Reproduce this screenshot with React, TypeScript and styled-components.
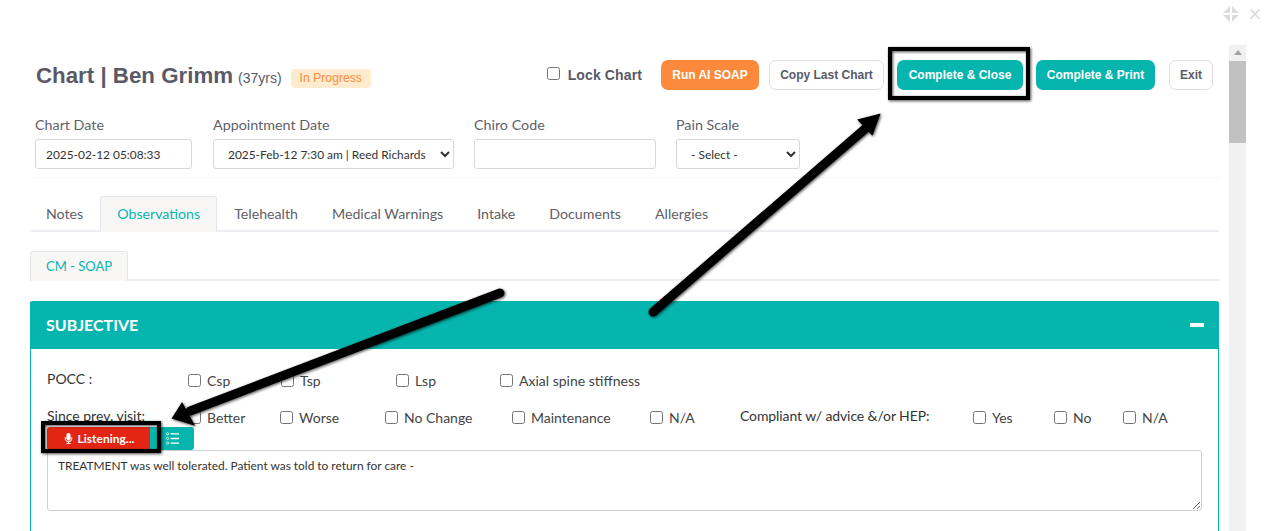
import React from 'react';
import styled, { createGlobalStyle } from 'styled-components';
import { FaMicrophone } from 'react-icons/fa';

const GlobalStyle = createGlobalStyle`
  html, body {
    margin: 0;
    padding: 0;
    background: #fff;
  }
  * {
    box-sizing: border-box;
  }
`;

const Page = styled.div`
  position: relative;
  width: 1270px;
  height: 531px;
  overflow: hidden;
  background: #fff;
  font-family: Lato, 'Noto Sans', sans-serif;
  color: #3a3a3a;
`;

const TopBar = styled.div`
  display: flex;
  justify-content: flex-end;
  align-items: center;
  gap: 11px;
  height: 28px;
  padding-right: 10px;
  margin-bottom: 17px;
`;

const Body = styled.div`
  display: flex;
  align-items: flex-start;
  padding-left: 30px;
`;

const Content = styled.div`
  width: 1189px;
  flex: none;
`;

const Scrollbar = styled.div`
  margin-left: 10px;
  width: 17px;
  height: 486px;
  background: #f1f1f1;
  flex: none;
  padding-top: 5px;
`;

const ScrollArrow = styled.div`
  width: 0;
  height: 0;
  margin: 0 auto 6px;
  border-left: 4px solid transparent;
  border-right: 4px solid transparent;
  border-bottom: 5px solid #a3a3a3;
`;

const ScrollThumb = styled.div`
  height: 82px;
  background: #c1c1c1;
`;

const HeaderRow = styled.div`
  display: flex;
  align-items: center;
  height: 30px;
  margin-top: 15px;
  padding: 0 6px;
`;

const Title = styled.h1`
  margin: 2px 0 0;
  font: 700 22.3px 'Liberation Sans', Arial, sans-serif;
  color: #5a5a66;
`;

const Age = styled.span`
  margin-left: 5px;
  font: 400 14px 'Liberation Sans', Arial, sans-serif;
  color: #5a5a66;
  padding-top: 6px;
`;

const Badge = styled.span`
  margin-left: 9px;
  margin-top: 7px;
  height: 19px;
  padding: 0 9px;
  border-radius: 4px;
  background: #ffeccf;
  color: #fd8a3c;
  font: 400 12.2px/19px 'Liberation Sans', Arial, sans-serif;
`;

const LockLabel = styled.label`
  display: flex;
  align-items: center;
  margin-left: auto;
  font: 700 14px 'Liberation Sans', Arial, sans-serif;
  letter-spacing: 0.12px;
  color: #5a5a66;
  margin-right: 19px;
`;

const NativeCheck = styled.input.attrs({ type: 'checkbox' })`
  width: 13px;
  height: 13px;
  margin: 0;
  flex: none;
`;

const LockCheck = styled(NativeCheck)`
  margin-right: 8px;
  margin-top: -3px;
`;

const ActionButton = styled.button<{ $tone: 'orange' | 'teal' | 'plain'; $width: number; $gap: number }>`
  width: ${(p) => p.$width}px;
  height: 30px;
  margin-left: ${(p) => p.$gap}px;
  padding: 0;
  border-radius: 7px;
  border: 1px solid ${(p) => (p.$tone === 'plain' ? '#dedede' : 'transparent')};
  background: ${(p) => (p.$tone === 'orange' ? '#fd8a3c' : p.$tone === 'teal' ? '#06b5ad' : '#fff')};
  color: ${(p) => (p.$tone === 'plain' ? '#5a5a66' : '#fff')};
  font: 700 12px 'Liberation Sans', Arial, sans-serif;
  flex: none;
`;

const FieldRow = styled.div`
  display: flex;
  margin-top: 26px;
  padding: 0 5px 8px;
  border-bottom: 1px solid #f6f6f6;
`;

const Field = styled.div<{ $width: number; $gap: number }>`
  width: ${(p) => p.$width}px;
  margin-right: ${(p) => p.$gap}px;
  flex: none;
`;

const FieldLabel = styled.div`
  font-size: 14.3px;
  line-height: 18px;
  margin-bottom: 5px;
  color: #5f5f68;
`;

const TextInput = styled.input`
  display: block;
  width: 100%;
  height: 30px;
  padding: 0 10px;
  border: 1px solid #d8d8d8;
  border-radius: 3px;
  background: #fff;
  font: 400 11.9px Lato, sans-serif;
  color: #333;
`;

const Select = styled.select`
  display: block;
  width: 100%;
  height: 30px;
  padding-left: 10px;
  border: 1px solid #d8d8d8;
  border-radius: 3px;
  background: #fff;
  font: 400 11.9px Lato, sans-serif;
  color: #333;
`;

const Tabs = styled.div`
  display: flex;
  margin-top: 18px;
  height: 36px;
  border-bottom: 2px solid #eeeef2;

  & > :first-child {
    margin-left: -1px;
  }
`;

const Tab = styled.div<{ $active?: boolean }>`
  height: 36px;
  padding: 0 16px;
  border: 1px solid ${(p) => (p.$active ? '#e4e6ea' : 'transparent')};
  border-bottom: none;
  border-radius: 3px 3px 0 0;
  background: ${(p) => (p.$active ? '#f8f7f6' : 'transparent')};
  color: ${(p) => (p.$active ? '#06b5ad' : '#606068')};
  font-size: 14.2px;
  line-height: 34px;
  flex: none;
`;

const SubTabs = styled(Tabs)`
  margin-top: 19px;
  height: 30px;

  & > :first-child {
    margin-left: 0;
  }
`;

const SubTab = styled(Tab)`
  height: 30px;
  line-height: 28px;
  width: 98px;
  text-align: center;
  padding: 0;
  font-size: 13px;
`;

const Panel = styled.section`
  margin-top: 20px;
  border: 1px solid #06b5ad;
  border-top: none;
  border-radius: 3px 3px 0 0;
  height: 240px;
`;

const PanelHeader = styled.div`
  display: flex;
  align-items: center;
  justify-content: space-between;
  height: 48px;
  margin: 0 -1px;
  padding: 0 15px 2px 16px;
  background: #06b5ad;
  border-radius: 3px 3px 0 0;
  color: #fff;
  font-size: 16px;
  font-weight: 700;
`;

const Collapse = styled.div`
  width: 14px;
  height: 4px;
  margin-top: 2px;
  background: #fff;
`;

const PanelBody = styled.div`
  padding: 0 16px;
`;

const OptionRow = styled.div<{ $top: number }>`
  display: flex;
  align-items: center;
  height: 22px;
  margin-top: ${(p) => p.$top}px;
  font-size: 14px;
`;

const RowLabel = styled.div<{ $width: number; $lift: number }>`
  width: ${(p) => p.$width}px;
  flex: none;
  margin-top: -${(p) => p.$lift}px;
  color: #333;
`;

const Option = styled.label<{ $width: number }>`
  display: flex;
  align-items: center;
  width: ${(p) => p.$width}px;
  flex: none;
  color: #444;
  gap: 6px;
`;

const ComplianceLabel = styled(RowLabel)`
  letter-spacing: -0.1px;
`;

const Toolbar = styled.div`
  display: flex;
  height: 23px;
  margin-top: -1px;
`;

const MicButton = styled.button`
  display: flex;
  align-items: center;
  justify-content: center;
  gap: 4px;
  width: 103px;
  height: 23px;
  padding: 0;
  border: none;
  border-radius: 3px 0 0 3px;
  background: #e32614;
  color: #fff;
  font: 700 12px Lato, sans-serif;
`;

const ListButton = styled.button`
  display: flex;
  align-items: center;
  justify-content: center;
  width: 44px;
  height: 23px;
  padding: 0;
  border: none;
  border-radius: 0 3px 3px 0;
  background: #06b5ad;
`;

const Notes = styled.textarea`
  display: block;
  width: 1155px;
  height: 61px;
  padding: 7px 10px;
  border: 1px solid #d0d0d0;
  border-radius: 3px;
  font: 400 11.9px Lato, sans-serif;
  color: #333;
`;

const Annotations = styled.svg`
  position: absolute;
  inset: 0;
  pointer-events: none;
`;

const ResizeIcons = () => (
  <svg width="16" height="16" viewBox="0 0 16 16" fill="#dcdcdc">
    <path d="M7 0v7H0zM9 0v7h7zM7 16V9H0zM9 16V9h7z" />
  </svg>
);

const CloseIcon = () => (
  <svg width="10" height="10" viewBox="0 0 10 10" stroke="#d8d8d8" strokeWidth="1.5">
    <path d="M0.5 0.5l9 9M9.5 0.5l-9 9" />
  </svg>
);

const ListIcon = () => (
  <svg width="13" height="13" viewBox="0 0 14 14" fill="none" stroke="#fff">
    <circle cx="1.7" cy="2" r="1.2" strokeWidth="0.8" />
    <circle cx="1.7" cy="7" r="1.2" strokeWidth="0.8" />
    <circle cx="1.7" cy="12" r="1.2" strokeWidth="0.8" />
    <path d="M5 2h9M5 7h9M5 12h9" strokeWidth="1.4" />
  </svg>
);

const pocc = [
  { label: 'Csp', width: 93 },
  { label: 'Tsp', width: 115 },
  { label: 'Lsp', width: 104 },
  { label: 'Axial spine stiffness', width: 200 },
];

const since = [
  { label: 'Better', width: 92 },
  { label: 'Worse', width: 105 },
  { label: 'No Change', width: 127 },
  { label: 'Maintenance', width: 138 },
  { label: 'N/A', width: 90 },
];

const compliance = [
  { label: 'Yes', width: 81 },
  { label: 'No', width: 69 },
  { label: 'N/A', width: 50 },
];

const tabs = ['Notes', 'Observations', 'Telehealth', 'Medical Warnings', 'Intake', 'Documents', 'Allergies'];

const App = () => (
  <Page>
    <GlobalStyle />
    <TopBar>
      <ResizeIcons />
      <CloseIcon />
    </TopBar>
    <Body>
      <Content>
        <HeaderRow>
          <Title>Chart | Ben Grimm</Title>
          <Age>(37yrs)</Age>
          <Badge>In Progress</Badge>
          <LockLabel>
            <LockCheck />
            Lock Chart
          </LockLabel>
          <ActionButton $tone="orange" $width={98} $gap={0}>Run AI SOAP</ActionButton>
          <ActionButton $tone="plain" $width={115} $gap={10}>Copy Last Chart</ActionButton>
          <ActionButton $tone="teal" $width={126} $gap={13}>Complete &amp; Close</ActionButton>
          <ActionButton $tone="teal" $width={119} $gap={13}>Complete &amp; Print</ActionButton>
          <ActionButton $tone="plain" $width={44} $gap={14}>Exit</ActionButton>
        </HeaderRow>
        <FieldRow>
          <Field $width={157} $gap={21}>
            <FieldLabel>Chart Date</FieldLabel>
            <TextInput defaultValue="2025-02-12 05:08:33" />
          </Field>
          <Field $width={241} $gap={20}>
            <FieldLabel>Appointment Date</FieldLabel>
            <Select>
              <option>2025-Feb-12 7:30 am | Reed Richards</option>
            </Select>
          </Field>
          <Field $width={182} $gap={20}>
            <FieldLabel>Chiro Code</FieldLabel>
            <TextInput />
          </Field>
          <Field $width={124} $gap={0}>
            <FieldLabel>Pain Scale</FieldLabel>
            <Select>
              <option>- Select -</option>
            </Select>
          </Field>
        </FieldRow>
        <Tabs>
          {tabs.map((tab) => (
            <Tab key={tab} $active={tab === 'Observations'}>{tab}</Tab>
          ))}
        </Tabs>
        <SubTabs>
          <SubTab $active>CM - SOAP</SubTab>
        </SubTabs>
        <Panel>
          <PanelHeader>
            SUBJECTIVE
            <Collapse />
          </PanelHeader>
          <PanelBody>
            <OptionRow $top={20}>
              <RowLabel $width={141} $lift={4}>POCC :</RowLabel>
              {pocc.map((o) => (
                <Option key={o.label} $width={o.width}>
                  <NativeCheck />
                  {o.label}
                </Option>
              ))}
            </OptionRow>
            <OptionRow $top={15}>
              <RowLabel $width={141} $lift={4}>Since prev. visit:</RowLabel>
              {since.map((o) => (
                <Option key={o.label} $width={o.width}>
                  <NativeCheck />
                  {o.label}
                </Option>
              ))}
              <ComplianceLabel $width={233} $lift={4}>Compliant w/ advice &amp;/or HEP:</ComplianceLabel>
              {compliance.map((o) => (
                <Option key={o.label} $width={o.width}>
                  <NativeCheck />
                  {o.label}
                </Option>
              ))}
            </OptionRow>
            <Toolbar>
              <MicButton>
                <FaMicrophone size={11} />
                Listening...
              </MicButton>
              <ListButton>
                <ListIcon />
              </ListButton>
            </Toolbar>
            <Notes defaultValue="TREATMENT was well tolerated. Patient was told to return for care -" />
          </PanelBody>
        </Panel>
      </Content>
      <Scrollbar>
        <ScrollArrow />
        <ScrollThumb />
      </Scrollbar>
    </Body>
    <Annotations width="1270" height="531" viewBox="0 0 1270 531">
      <defs>
        <filter id="soft" x="-10%" y="-10%" width="120%" height="120%">
          <feDropShadow dx="1" dy="1" stdDeviation="1.5" floodColor="#000" floodOpacity="0.7" />
        </filter>
      </defs>
      <g filter="url(#soft)">
        <rect x="890" y="49" width="138" height="49" fill="none" stroke="#000" strokeWidth="4" />
        <rect x="43" y="423" width="116" height="28" fill="none" stroke="#000" strokeWidth="4" />
        <path d="M653 312L866 128" stroke="#000" strokeWidth="9" strokeLinecap="round" />
        <path d="M879 115L859 120L872 134Z" fill="#000" stroke="#000" strokeWidth="2" />
        <path d="M500 293L190 411" stroke="#000" strokeWidth="9" strokeLinecap="round" />
        <path d="M173 418L182 404L193 424Z" fill="#000" stroke="#000" strokeWidth="2" />
      </g>
    </Annotations>
  </Page>
);

export default App;
